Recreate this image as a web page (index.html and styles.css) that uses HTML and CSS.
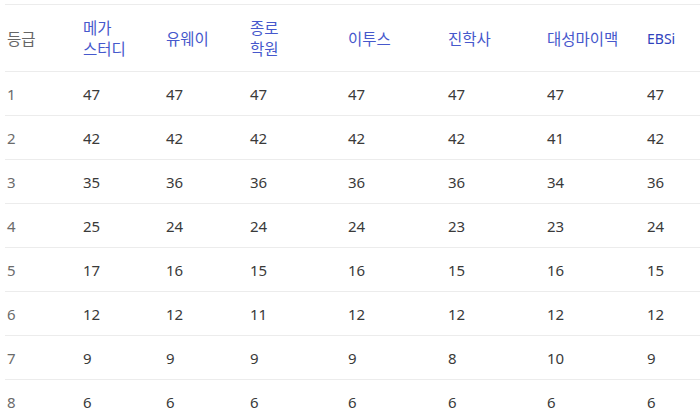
FILE: index.html
```html
<!DOCTYPE html>
<html lang="ko">
<head>
<meta charset="utf-8">
<link rel="stylesheet" href="styles.css">
</head>
<body>
<table class="grade-table">
  <colgroup>
    <col class="c-grade"><col class="c-mega"><col class="c-uway"><col class="c-jongro"><col class="c-etoos"><col class="c-jinhak"><col class="c-daesung"><col class="c-ebsi">
  </colgroup>
  <thead>
    <tr>
      <th class="grade">등급</th>
      <th>메가<br>스터디</th>
      <th>유웨이</th>
      <th>종로<br>학원</th>
      <th>이투스</th>
      <th>진학사</th>
      <th>대성마이맥</th>
      <th class="ebsi">EBSi</th>
    </tr>
  </thead>
  <tbody>
    <tr><td class="grade">1</td><td>47</td><td>47</td><td>47</td><td>47</td><td>47</td><td>47</td><td>47</td></tr>
    <tr><td class="grade">2</td><td>42</td><td>42</td><td>42</td><td>42</td><td>42</td><td>41</td><td>42</td></tr>
    <tr><td class="grade">3</td><td>35</td><td>36</td><td>36</td><td>36</td><td>36</td><td>34</td><td>36</td></tr>
    <tr><td class="grade">4</td><td>25</td><td>24</td><td>24</td><td>24</td><td>23</td><td>23</td><td>24</td></tr>
    <tr><td class="grade">5</td><td>17</td><td>16</td><td>15</td><td>16</td><td>15</td><td>16</td><td>15</td></tr>
    <tr><td class="grade">6</td><td>12</td><td>12</td><td>11</td><td>12</td><td>12</td><td>12</td><td>12</td></tr>
    <tr><td class="grade">7</td><td>9</td><td>9</td><td>9</td><td>9</td><td>8</td><td>10</td><td>9</td></tr>
    <tr><td class="grade">8</td><td>6</td><td>6</td><td>6</td><td>6</td><td>6</td><td>6</td><td>6</td></tr>
  </tbody>
</table>
</body>
</html>
```
FILE: styles.css
```css
html, body {
  margin: 0;
  padding: 0;
  background: #ffffff;
  overflow: hidden;
}
body {
  padding: 4px 0 0 5px;
  font-family: "Noto Sans", "Noto Sans CJK KR", sans-serif;
}
.grade-table {
  border-collapse: collapse;
  table-layout: fixed;
  width: 700px;
}
.c-grade { width: 76px; }
.c-mega { width: 83px; }
.c-uway { width: 84px; }
.c-jongro { width: 98px; }
.c-etoos { width: 100px; }
.c-jinhak { width: 99px; }
.c-daesung { width: 100px; }
.c-ebsi { width: 60px; }
.grade-table th,
.grade-table td {
  text-align: left;
  vertical-align: middle;
  padding: 0 0 0 2px;
  border-top: 1px solid #ececec;
  white-space: nowrap;
}
.grade-table th {
  height: 66px;
  font-family: "Noto Sans CJK KR", sans-serif;
  font-weight: 400;
  font-size: 15.5px;
  line-height: 21px;
  color: #4658cc;
}
.grade-table th.grade {
  color: #666666;
}
.grade-table th.ebsi {
  font-family: "Noto Sans", sans-serif;
  font-size: 14px;
  color: #2f43bd;
}
.grade-table td {
  height: 43px;
  font-size: 15px;
  color: #3a3a3a;
}
.grade-table td.grade {
  color: #6b6b6b;
}
```
